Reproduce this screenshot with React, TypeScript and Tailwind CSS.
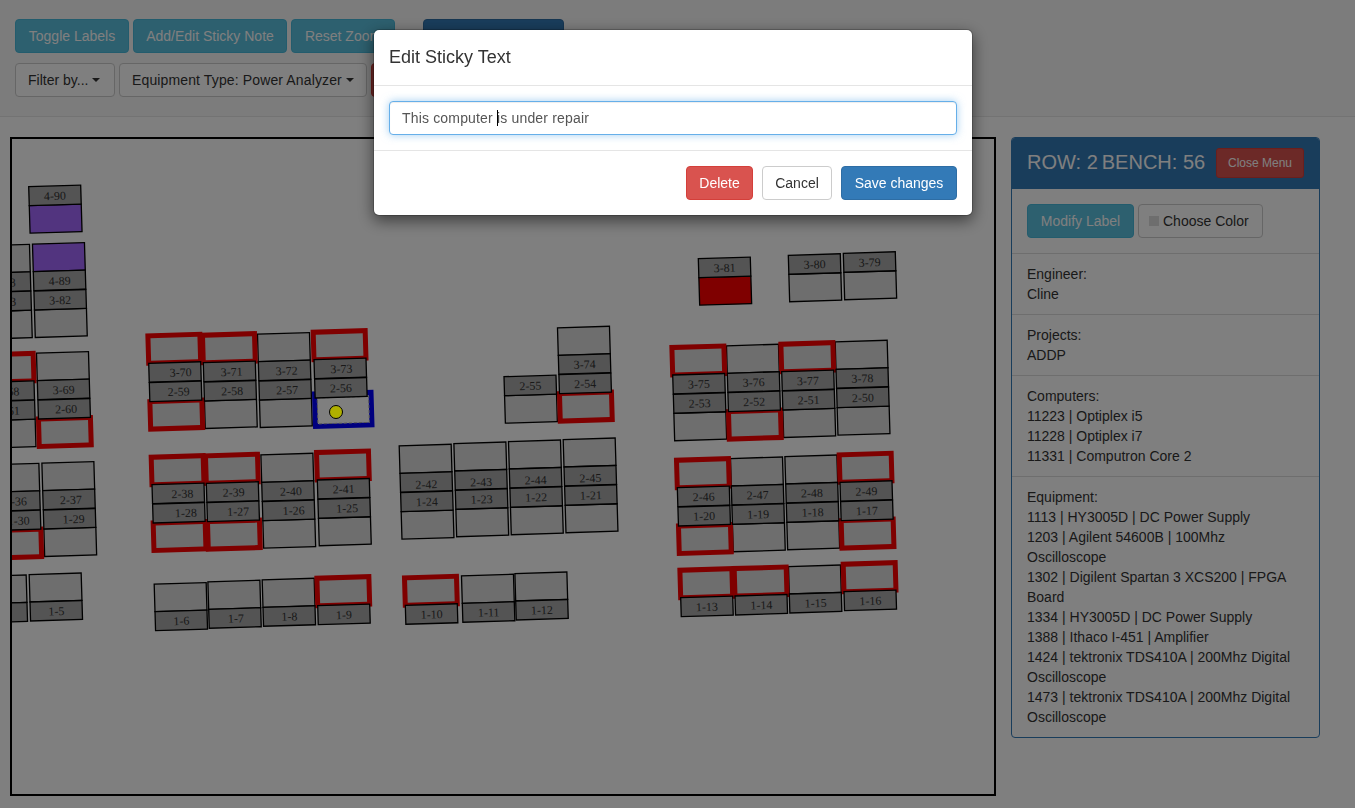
const btn = 'inline-flex items-center justify-center h-[34px] border rounded text-sm leading-5 whitespace-pre'
const info = btn + ' bg-[#5bc0de] border-[#46b8da] text-white'
const plain = btn + ' bg-white border-[#ccc] text-[#333]'

type Fill = 'plain' | 'red' | 'blue' | 'purple' | 'solid'
type Half = [string, Fill, number?]

// origin of the top label, then the two benches sharing it
const pairs: [number, number, Half, Half][] = [
  [148.7, 363.3, ['3-70', 'red', 5.6], ['2-59', 'red', 3]],
  [203.3, 362.7, ['3-71', 'red', 2], ['2-58', 'plain', 2]],
  [258.3, 361.7, ['3-72', 'plain', 2], ['2-57', 'plain', 2]],
  [314, 359.7, ['3-73', 'red', 1], ['2-56', 'blue', 0]],
  [37.3, 380.7, ['3-69', 'plain', 0], ['2-60', 'red', 2]],
  [-18, 382.4, ['3-68', 'red', 0], ['2-61', 'plain', 0]],
  [33.3, 271.7, ['4-89', 'purple', 0], ['3-82', 'plain', 0]],
  [-21.7, 273.4, ['4-88', 'plain', 0], ['3-83', 'plain', 0]],
  [42.7, 490.7, ['2-37', 'plain', 2], ['1-29', 'plain', 4]],
  [-12.3, 492.4, ['2-36', 'plain', 2], ['1-30', 'red', 4]],
  [152, 484.7, ['2-38', 'red', 4], ['1-28', 'red', 7]],
  [206.3, 483.3, ['2-39', 'red', 1], ['1-27', 'red', 5]],
  [261.7, 482.3, ['2-40', 'plain', 3], ['1-26', 'plain', 5]],
  [317.3, 480, ['2-41', 'red', 0], ['1-25', 'plain', 3]],
  [558.3, 355.3, ['3-74', 'plain', 0], ['2-54', 'red', 0]],
  [400, 473.3, ['2-42', 'plain', 0], ['1-24', 'plain', 0]],
  [454.7, 471, ['2-43', 'plain', 0], ['1-23', 'plain', 0]],
  [509.3, 469, ['2-44', 'plain', 0], ['1-22', 'plain', 0]],
  [564, 467, ['2-45', 'plain', 0], ['1-21', 'plain', 0]],
  [672.7, 375, ['3-75', 'red', 0], ['2-53', 'plain', 0]],
  [727.3, 373.3, ['3-76', 'plain', 0], ['2-52', 'red', 0]],
  [781.7, 371.7, ['3-77', 'red', 0], ['2-51', 'plain', 0]],
  [836, 369.3, ['3-78', 'plain', 0], ['2-50', 'plain', 0]],
  [677.3, 487.7, ['2-46', 'red', 0], ['1-20', 'red', 0]],
  [731.3, 486, ['2-47', 'plain', 0], ['1-19', 'plain', 0]],
  [785.7, 484, ['2-48', 'plain', 0], ['1-18', 'plain', 0]],
  [840, 482.3, ['2-49', 'red', 0], ['1-17', 'red', 0]],
]

// body above the label
const ups: [number, number, string, Fill, number?][] = [
  [-25, 604, '1-4', 'plain'],
  [30, 602, '1-5', 'plain'],
  [155, 611.7, '1-6', 'plain'],
  [208.7, 609.3, '1-7', 'plain', 1],
  [263, 607.3, '1-8', 'plain'],
  [317.7, 605.7, '1-9', 'red'],
  [405.3, 605.3, '1-10', 'red'],
  [462.3, 603.3, '1-11', 'plain'],
  [515.7, 601, '1-12', 'plain'],
  [680.7, 597.7, '1-13', 'red'],
  [735, 596, '1-14', 'red'],
  [789.3, 594, '1-15', 'plain'],
  [844, 591.7, '1-16', 'red'],
]

// label above the body
const downs: [number, number, string, Fill, number?][] = [
  [28.7, 186.7, '4-90', 'purple'],
  [504, 376.7, '2-55', 'plain'],
  [698.3, 258.7, '3-81', 'solid'],
  [788.3, 255.3, '3-80', 'plain'],
  [843.3, 253.3, '3-79', 'plain'],
]

type Bench = { x: number; y: number; label: string; fill: Fill; dx: number; up: boolean }

const benches: Bench[] = [
  ...pairs.flatMap(([x, y, a, b]) => [
    { x, y, label: a[0], fill: a[1], dx: a[2] ?? 0, up: true },
    { x: x + 0.6, y: y + 19.3, label: b[0], fill: b[1], dx: b[2] ?? 0, up: false },
  ]),
  ...ups.map(([x, y, label, fill, dx]) => ({ x, y, label, fill, dx: dx ?? 0, up: true })),
  ...downs.map(([x, y, label, fill, dx]) => ({ x, y, label, fill, dx: dx ?? 0, up: false })),
]

const W = 52
const LH = 19
const BH = 27.5
const tilt = (b: Bench) => `rotate(-1.7 ${b.x} ${b.y}) translate(${b.x} ${b.y})`

function BodyRect({ b }: { b: Bench }) {
  const y = b.up ? -BH : LH
  if (b.fill === 'red') {
    return <rect x={0} y={y} width={W} height={BH} fill="#dcdcdc" stroke="#f00" strokeWidth={5} />
  }
  if (b.fill === 'blue') {
    return (
      <g>
        <rect x={-0.5} y={y - 4} width={56.5} height={BH + 5} fill="#fff" stroke="#00f" strokeWidth={5} />
        <rect x={2} y={y} width={51.5} height={BH - 1.5} fill="none" stroke="#aaa" strokeDasharray="3 2" />
      </g>
    )
  }
  const color = b.fill === 'purple' ? '#a568ff' : b.fill === 'solid' ? '#f00' : '#dcdcdc'
  return <rect x={0} y={y} width={W} height={BH} fill={color} stroke="#000" strokeWidth={1.3} />
}

function FloorPlan() {
  const isFrame = (b: Bench) => b.fill === 'red' || b.fill === 'blue'
  return (
    <svg width={982} height={655} viewBox="12 139 982 655" className="block">
      {[...benches.filter((b) => !isFrame(b)), ...benches.filter(isFrame)].map((b) => (
        <g key={b.label} transform={tilt(b)}>
          <BodyRect b={b} />
        </g>
      ))}
      {benches.map((b) => (
        <g key={b.label} transform={tilt(b)}>
          <rect x={0} y={0} width={W} height={LH} fill="#a8a8a8" stroke="#000" strokeWidth={1.3} />
          <text
            x={W / 2 + b.dx}
            y={/^(2-4[2-5])$/.test(b.label) ? 16 : 14}
            textAnchor="middle"
            fontSize={12}
            fontFamily="'Liberation Serif', serif"
            fill="#333"
          >
            {b.label}
          </text>
        </g>
      ))}
    </svg>
  )
}

function Caret() {
  return <span className="inline-block w-0 h-0 ml-[4px] border-x-4 border-x-transparent border-t-4 border-t-current" />
}

function Section({ lines }: { lines: string[] }) {
  return (
    <div className="border-t border-[#ddd] px-[15px] py-[10px] text-sm leading-5 text-[#333]">
      {lines.map((line) => (
        <div key={line}>{line}</div>
      ))}
    </div>
  )
}

export default function App() {
  return (
    <div className="relative h-[808px] overflow-hidden bg-white font-['Liberation_Sans',Arial,sans-serif]">
      {/* Toolbar */}
      <div className="h-[117px] bg-[#f8f8f8] border-b border-[#e7e7e7] px-[15px] pt-[19px]">
        <div className="flex gap-1">
          <button className={info + ' w-[114px]'}>Toggle Labels</button>
          <button className={info + ' w-[154px]'}>Add/Edit Sticky Note</button>
          <button className={info + ' w-[104px]'}>Reset Zoom</button>
          <button className={btn + ' ml-[24px] w-[141px] bg-[#337ab7] border-[#2e6da4]'} />
        </div>
        <div className="flex gap-1 mt-[10px]">
          <button className={plain + ' w-[100px] !justify-start pl-3'}>
            Filter by...
            <Caret />
          </button>
          <button className={plain + ' w-[248px] !justify-start pl-3 tracking-[0.13px]'}>
            Equipment Type: Power Analyzer
            <Caret />
          </button>
          <button className={btn + ' w-[90px] bg-[#d9534f] border-[#d43f3a]'} />
        </div>
      </div>

      {/* Floor plan + details */}
      <div className="flex items-start pl-[10px] pt-[20px]">
        <div className="w-[986px] h-[659px] border-2 border-black overflow-hidden">
          <FloorPlan />
        </div>

        <div className="w-[309px] ml-[15px] border border-[#337ab7] rounded overflow-hidden">
          <div className="h-[51px] bg-[#337ab7] flex items-start justify-between pt-[10px] pl-[15px] pr-[15px] text-white">
            <span className="text-[20px] leading-[29px]">
              <span className="mr-[4px]">ROW: 2</span>BENCH: 56
            </span>
            <button className="w-[88px] h-[30px] border border-[#d43f3a] rounded-[3px] bg-[#d9534f] text-xs text-white">
              Close Menu
            </button>
          </div>
          <div className="flex gap-1 p-[15px]">
            <button className={info + ' w-[107px]'}>Modify Label</button>
            <button className={plain + ' w-[125px] !justify-start px-[10px]'}>
              <span className="w-[10px] h-[10px] mr-1 bg-[#dcdcdc]" />
              Choose Color
            </button>
          </div>
          <Section lines={['Engineer:', 'Cline']} />
          <Section lines={['Projects:', 'ADDP']} />
          <Section lines={['Computers:', '11223 | Optiplex i5', '11228 | Optiplex i7', '11331 | Computron Core 2']} />
          <Section
            lines={[
              'Equipment:',
              '1113 | HY3005D | DC Power Supply',
              '1203 | Agilent 54600B | 100Mhz Oscilloscope',
              '1302 | Digilent Spartan 3 XCS200 | FPGA Board',
              '1334 | HY3005D | DC Power Supply',
              '1388 | Ithaco I-451 | Amplifier',
              '1424 | tektronix TDS410A | 200Mhz Digital Oscilloscope',
              '1473 | tektronix TDS410A | 200Mhz Digital Oscilloscope',
            ]}
          />
        </div>
      </div>

      {/* Modal */}
      <div className="fixed inset-0 bg-[rgba(0,0,0,0.5)]">
        {/* marker on bench 2-56 */}
        <span className="absolute left-[328.5px] top-[404.5px] w-[14px] h-[14px] rounded-full border-[1.5px] border-black bg-[#b0b000]" />
        <div className="ml-[373px] mt-[29px] w-[600px] rounded-md border border-black/20 bg-white bg-clip-padding shadow-[0_5px_15px_rgba(0,0,0,0.5)]">
          <div className="p-[15px] border-b border-[#e5e5e5] text-[18px] leading-[25px] text-[#333]">Edit Sticky Text</div>
          <div className="p-[15px]">
            <div className="relative">
              <input
                readOnly
                value="This computer is under repair"
                className="block w-full h-[34px] px-3 border border-[#66afe9] rounded bg-white text-sm tracking-[0.17px] text-[#555] outline-none shadow-[inset_0_1px_1px_rgba(0,0,0,0.075),0_0_8px_rgba(102,175,233,0.6)]"
              />
              <span className="absolute left-[108px] top-[9px] w-px h-4 bg-black" />
            </div>
          </div>
          <div className="flex justify-end gap-[9px] p-[15px] border-t border-[#e5e5e5]">
            <button className={btn + ' w-[67px] bg-[#d9534f] border-[#d43f3a] text-white'}>Delete</button>
            <button className={plain + ' w-[70px]'}>Cancel</button>
            <button className={btn + ' w-[116px] bg-[#337ab7] border-[#2e6da4] text-white'}>Save changes</button>
          </div>
        </div>
      </div>
    </div>
  )
}
